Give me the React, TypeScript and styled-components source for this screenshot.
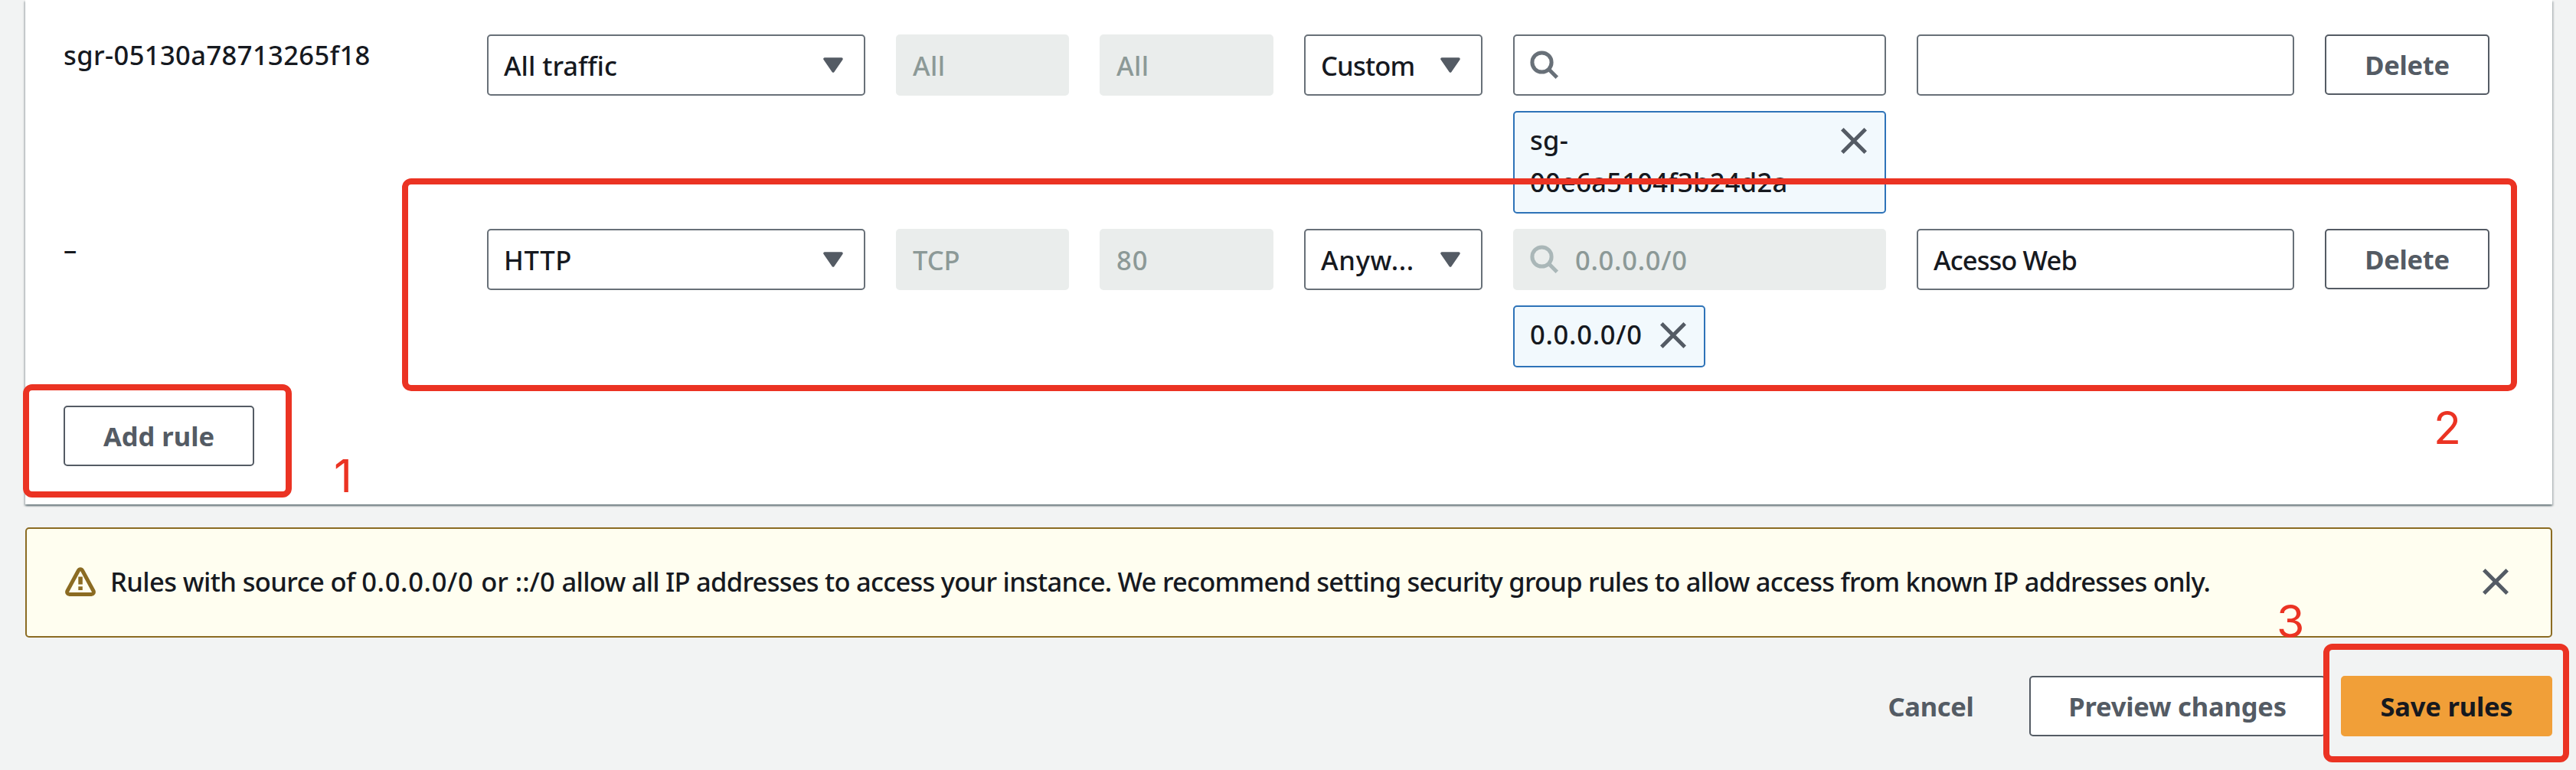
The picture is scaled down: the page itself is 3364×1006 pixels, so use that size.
import React from "react";
import styled, { createGlobalStyle, css } from "styled-components";

const colors = {
  page: "#f2f3f3",
  text: "#16191f",
  muted: "#545b64",
  border: "#687078",
  disabledBg: "#eaedec",
  disabledText: "#8c9997",
  disabledIcon: "#aab7b8",
  tokenBorder: "#2e73b8",
  tokenBg: "#f2f9fd",
  warning: "#8b6b22",
  warningBg: "#fffef0",
  primary: "#f19f38",
  mark: "#eb3323",
};

const GlobalStyle = createGlobalStyle`
  * { box-sizing: border-box; }
  body {
    margin: 0;
    background: ${colors.page};
    color: ${colors.text};
    font-family: "Noto Sans", "Open Sans", sans-serif;
    font-size: 34.5px;
    font-weight: 500;
    line-height: 55px;
  }
`;

const Page = styled.div`
  position: relative;
  width: 3364px;
  height: 1006px;
  overflow: hidden;
  padding: 0 31px 0 33px;
  display: flex;
  flex-direction: column;
`;

const Card = styled.section`
  height: 659px;
  flex: none;
  padding: 45px 50px 50px;
  background: #fff;
  box-shadow:
    0 2px 2px rgba(0, 28, 36, 0.4),
    2px 2px 2px rgba(0, 28, 36, 0.15),
    -2px 2px 2px rgba(0, 28, 36, 0.15);
  display: flex;
  flex-direction: column;
  align-items: flex-start;
  justify-content: space-between;
`;

const Rules = styled.div`
  display: grid;
  grid-template-columns: 513px 494px 226px 227px 233px 487px 493px 215px;
  gap: 20px 40px;
  align-items: start;
`;

const Text = styled.span<{ $tracking?: number }>`
  letter-spacing: ${(p) => (p.$tracking ? `${p.$tracking}px` : "normal")};
  white-space: pre;
`;

const RuleId = styled(Text)`
  margin-top: -1px;
`;

const Control = styled.div<{ $disabled?: boolean }>`
  height: 80px;
  padding: 0 20px;
  border: 2px solid ${(p) => (p.$disabled ? colors.disabledBg : colors.border)};
  border-radius: 5px;
  background: ${(p) => (p.$disabled ? colors.disabledBg : "#fff")};
  color: ${(p) => (p.$disabled ? colors.disabledText : colors.text)};
  display: flex;
  align-items: center;
`;

const SelectControl = styled(Control)`
  justify-content: space-between;
  padding-right: 27px;
`;

const SearchControl = styled(Control)`
  gap: 21px;
`;

const SourceCell = styled.div`
  display: flex;
  flex-direction: column;
  align-items: flex-start;
  gap: 20px;

  > ${SearchControl} {
    width: 100%;
  }
`;

const Token = styled.div<{ $fill?: boolean }>`
  min-height: 81px;
  padding: 8px 23px 12px 20px;
  border: 2px solid ${colors.tokenBorder};
  border-radius: 5px;
  background: ${colors.tokenBg};
  display: flex;
  align-items: flex-start;
  justify-content: space-between;
  gap: 23px;
  ${(p) =>
    p.$fill &&
    css`
      width: 100%;
    `}
`;

const TokenLabel = styled.div`
  display: flex;
  flex-direction: column;
`;

const TokenClose = styled.div`
  display: flex;
  padding-top: 12px;
`;

const Button = styled.button<{ $kind?: "normal" | "primary" | "link" }>`
  height: 79px;
  padding: 0 0 1px;
  border: 2px solid ${colors.muted};
  border-radius: 5px;
  background: #fff;
  color: ${colors.muted};
  font: inherit;
  font-weight: 700;
  ${(p) =>
    p.$kind === "primary" &&
    css`
      border-color: ${colors.primary};
      background: ${colors.primary};
      color: ${colors.text};
    `}
  ${(p) =>
    p.$kind === "link" &&
    css`
      border-color: transparent;
      background: transparent;
    `}
`;

const DeleteButton = styled(Button)`
  width: 215px;
`;
const AddButton = styled(Button)`
  width: 249px;
`;
const CancelButton = styled(Button)`
  width: 217px;
`;
const PreviewButton = styled(Button)`
  width: 387px;
`;
const SaveButton = styled(Button)`
  width: 276px;
`;

const Alert = styled.section`
  height: 144px;
  flex: none;
  margin-top: 30px;
  padding: 0 55px 3px 50px;
  border: 2px solid ${colors.warning};
  border-radius: 5px;
  background: ${colors.warningBg};
  display: flex;
  align-items: center;
  gap: 19px;
`;

const AlertText = styled.p`
  flex: 1;
  margin: 0;
  white-space: nowrap;
`;

const Footer = styled.footer`
  margin-top: 50px;
  display: flex;
  justify-content: flex-end;
  gap: 20px;
`;

const Icon = styled.svg`
  flex: none;
  display: block;
`;

/* Red marks drawn over the console */
const Frame = styled.div<{ $x: number; $y: number; $w: number; $h: number }>`
  position: absolute;
  left: ${(p) => p.$x}px;
  top: ${(p) => p.$y}px;
  width: ${(p) => p.$w}px;
  height: ${(p) => p.$h}px;
  border: 8px solid ${colors.mark};
  border-radius: 12px;
`;

const Step = styled.div<{ $x: number; $y: number }>`
  position: absolute;
  left: ${(p) => p.$x}px;
  top: ${(p) => p.$y}px;
  color: ${colors.mark};
  font: 400 59px/60px Inter, Roboto, sans-serif;
`;

const Caret = () => (
  <Icon width="26" height="20" viewBox="0 0 26 20">
    <path
      d="M2 2H24L13 18Z"
      fill={colors.muted}
      stroke={colors.muted}
      strokeWidth="3.5"
      strokeLinejoin="round"
    />
  </Icon>
);

const SearchIcon = ({ color = colors.border }: { color?: string }) => (
  <Icon width="38" height="38" viewBox="0 0 38 38" fill="none" stroke={color} strokeWidth="5">
    <circle cx="15.5" cy="15.5" r="12.6" />
    <path d="M24.3 24.3L35.3 35.3" />
  </Icon>
);

const CloseIcon = () => (
  <Icon width="34" height="34" viewBox="0 0 34 34" fill="none" stroke={colors.muted} strokeWidth="5">
    <path d="M1.8 1.8L32.2 32.2M32.2 1.8L1.8 32.2" />
  </Icon>
);

const WarningIcon = () => (
  <Icon width="40" height="38" viewBox="0 0 40 38">
    <path
      d="M17.5 4.2a2.8 2.8 0 0 1 5 0L37 31a3 3 0 0 1-2.6 4.4H5.6A3 3 0 0 1 3 31Z"
      fill="none"
      stroke={colors.warning}
      strokeWidth="5"
      strokeLinejoin="round"
    />
    <path d="M17.3 12.6h5.5v10h-5.5zM17.3 25.2h5.5v4.8h-5.5z" fill={colors.warning} />
  </Icon>
);

type Label = { text: string; tracking?: number };

const Select = ({ text, tracking }: Label) => (
  <SelectControl>
    <Text $tracking={tracking}>{text}</Text>
    <Caret />
  </SelectControl>
);

const DisabledInput = ({ text, tracking }: Label) => (
  <Control $disabled>
    <Text $tracking={tracking}>{text}</Text>
  </Control>
);

type Rule = {
  id: Label;
  type: Label;
  protocol: Label;
  port: Label;
  sourceType: Label;
  search?: Label;
  token: Label[];
  description?: Label;
};

const rules: Rule[] = [
  {
    id: { text: "sgr-05130a78713265f18", tracking: 0.42 },
    type: { text: "All traffic" },
    protocol: { text: "All", tracking: 0.4 },
    port: { text: "All", tracking: 0.4 },
    sourceType: { text: "Custom", tracking: -0.8 },
    token: [
      { text: "sg-", tracking: 0.3 },
      { text: "00e6a5104f3b24d2a", tracking: 0.3 },
    ],
  },
  {
    id: { text: "–" },
    type: { text: "HTTP", tracking: 0.7 },
    protocol: { text: "TCP" },
    port: { text: "80", tracking: 1 },
    sourceType: { text: "Anyw...", tracking: 0.7 },
    search: { text: "0.0.0.0/0", tracking: 0.75 },
    token: [{ text: "0.0.0.0/0", tracking: 0.75 }],
    description: { text: "Acesso Web", tracking: -0.9 },
  },
];

const warning: Label[] = [
  { text: "Rules with source of ", tracking: -0.6 },
  { text: "0.0.0.0/0 ", tracking: 0.7 },
  { text: "or ::/0 " },
  { text: "allow all IP addresses to access your instance. ", tracking: -0.74 },
  {
    text: "We recommend setting security group rules to allow access from known IP addresses only.",
    tracking: -0.75,
  },
];

export default function App() {
  return (
    <Page>
      <GlobalStyle />
      <Card>
        <Rules>
          {rules.map((rule) => (
            <React.Fragment key={rule.id.text}>
              <RuleId $tracking={rule.id.tracking}>{rule.id.text}</RuleId>
              <Select {...rule.type} />
              <DisabledInput {...rule.protocol} />
              <DisabledInput {...rule.port} />
              <Select {...rule.sourceType} />
              <SourceCell>
                <SearchControl $disabled={!!rule.search}>
                  <SearchIcon color={rule.search ? colors.disabledIcon : colors.border} />
                  {rule.search && <Text $tracking={rule.search.tracking}>{rule.search.text}</Text>}
                </SearchControl>
                <Token $fill={rule.token.length > 1}>
                  <TokenLabel>
                    {rule.token.map((line) => (
                      <Text key={line.text} $tracking={line.tracking}>
                        {line.text}
                      </Text>
                    ))}
                  </TokenLabel>
                  <TokenClose>
                    <CloseIcon />
                  </TokenClose>
                </Token>
              </SourceCell>
              <Control>
                {rule.description && (
                  <Text $tracking={rule.description.tracking}>{rule.description.text}</Text>
                )}
              </Control>
              <DeleteButton>
                <Text $tracking={-0.3}>Delete</Text>
              </DeleteButton>
            </React.Fragment>
          ))}
        </Rules>
        <AddButton>
          <Text>Add rule</Text>
        </AddButton>
      </Card>

      <Alert>
        <WarningIcon />
        <AlertText>
          {warning.map((part) => (
            <Text key={part.text} $tracking={part.tracking}>
              {part.text}
            </Text>
          ))}
        </AlertText>
        <CloseIcon />
      </Alert>

      <Footer>
        <CancelButton $kind="link">
          <Text $tracking={-0.3}>Cancel</Text>
        </CancelButton>
        <PreviewButton>
          <Text $tracking={-0.2}>Preview changes</Text>
        </PreviewButton>
        <SaveButton $kind="primary">
          <Text $tracking={-0.2}>Save rules</Text>
        </SaveButton>
      </Footer>

      <Frame $x={30} $y={502} $w={351} $h={148} />
      <Frame $x={525} $y={232.5} $w={2762} $h={278} />
      <Frame $x={3034} $y={841} $w={321} $h={155} />
      <Step $x={436} $y={591.5}>1</Step>
      <Step $x={3178} $y={528.5}>2</Step>
      <Step $x={2973} $y={782}>3</Step>
    </Page>
  );
}
